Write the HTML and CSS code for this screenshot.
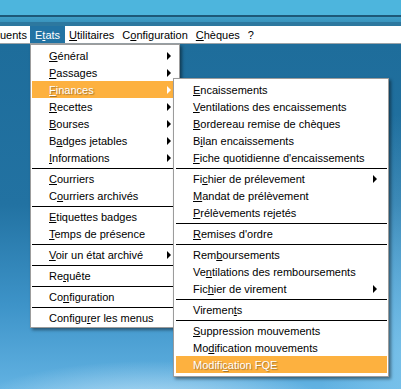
FILE: index.html
```html
<!DOCTYPE html>
<html lang="fr">
<head>
    <meta charset="utf-8">
    <title>Etats</title>
    <link rel="stylesheet" href="styles.css">
</head>
<body>
    <div class="desk">
        <div class="sky"></div>
        <div class="menubar">
            <span class="bar-item first">uents</span>
            <span class="bar-item open">E<u>t</u>ats</span>
            <span class="bar-item"><u>U</u>tilitaires</span>
            <span class="bar-item">C<u>o</u>nfiguration</span>
            <span class="bar-item"><u>C</u>hèques</span>
            <span class="bar-item">?</span>
        </div>
        <div class="ground"></div>

        <!-- menu Etats -->
        <div class="menu menu-etats">
            <div class="item sub"><span><u>G</u>énéral</span><i class="arrow"></i></div>
            <div class="item sub"><span><u>P</u>assages</span><i class="arrow"></i></div>
            <div class="item sub active"><span><u>F</u>inances</span><i class="arrow"></i></div>
            <div class="item sub"><span><u>R</u>ecettes</span><i class="arrow"></i></div>
            <div class="item sub"><span><u>B</u>ourses</span><i class="arrow"></i></div>
            <div class="item sub"><span>B<u>a</u>dges jetables</span><i class="arrow"></i></div>
            <div class="item sub"><span><u>I</u>nformations</span><i class="arrow"></i></div>
            <div class="sep"></div>
            <div class="item"><span><u>C</u>ourriers</span></div>
            <div class="item"><span>C<u>o</u>urriers archivés</span></div>
            <div class="sep"></div>
            <div class="item"><span><u>E</u>tiquettes badges</span></div>
            <div class="item"><span><u>T</u>emps de présence</span></div>
            <div class="sep"></div>
            <div class="item sub"><span><u>V</u>oir un état archivé</span><i class="arrow"></i></div>
            <div class="sep"></div>
            <div class="item"><span>Re<u>q</u>uête</span></div>
            <div class="sep"></div>
            <div class="item"><span>Co<u>n</u>figuration</span></div>
            <div class="sep"></div>
            <div class="item"><span>Configu<u>r</u>er les menus</span></div>
        </div>

        <!-- sous-menu Finances -->
        <div class="menu menu-finances">
            <div class="item"><span><u>E</u>ncaissements</span></div>
            <div class="item"><span><u>V</u>entilations des encaissements</span></div>
            <div class="item"><span><u>B</u>ordereau remise de chèques</span></div>
            <div class="item"><span>B<u>i</u>lan encaissements</span></div>
            <div class="item"><span><u>F</u>iche quotidienne d'encaissements</span></div>
            <div class="sep"></div>
            <div class="item sub"><span>Fi<u>c</u>hier de prélevement</span><i class="arrow"></i></div>
            <div class="item"><span><u>M</u>andat de prélèvement</span></div>
            <div class="item"><span><u>P</u>rélèvements rejetés</span></div>
            <div class="sep"></div>
            <div class="item"><span><u>R</u>emises d'ordre</span></div>
            <div class="sep"></div>
            <div class="item"><span>Rem<u>b</u>oursements</span></div>
            <div class="item"><span>Ve<u>n</u>tilations des remboursements</span></div>
            <div class="item sub"><span>Fic<u>h</u>ier de virement</span><i class="arrow"></i></div>
            <div class="sep"></div>
            <div class="item"><span>Viremen<u>t</u>s</span></div>
            <div class="sep"></div>
            <div class="item"><span><u>S</u>uppression mouvements</span></div>
            <div class="item"><span>Mo<u>d</u>ification mouvements</span></div>
            <div class="item active"><span>Modifi<u>c</u>ation FQE</span></div>
        </div>
    </div>
</body>
</html>
```

FILE: styles.css
```css
html, body {
    margin: 0;
    padding: 0;
}

body {
    width: 401px;
    height: 389px;
    overflow: hidden;
    font-family: "Liberation Sans", Arial, sans-serif;
    font-size: 11px;
    color: #000;
}

.desk {
    position: relative;
    width: 401px;
    height: 389px;
    display: flex;
    flex-direction: column;
}

.sky {
    height: 26px;
    background:
        linear-gradient(to bottom,
            #4db5dd 0, #4db5dd 15px,
            #1d5878 15px, #1d5878 17px,
            #3f9fc8 17px, #3a94bd 22px,
            #2d789f 22px, #2d789f 26px);
}

.menubar {
    height: 17px;
    background: #fff;
    border-bottom: 1px solid #9aa3a8;
    display: flex;
    align-items: stretch;
}

.bar-item {
    display: flex;
    align-items: center;
    padding: 0 4px;
}

.bar-item.first {
    width: 30px;
    padding: 0;
    overflow: hidden;
}

.bar-item.open {
    background: #2273a3;
    color: #fff;
    padding: 0 5px;
}

.ground {
    flex: 1;
    background:
        radial-gradient(ellipse 130px 45px at 50px 389px, rgba(255,255,255,.95), rgba(255,255,255,0)),
        radial-gradient(ellipse 190px 55px at 150px 372px, rgba(220,240,252,.85), rgba(220,240,252,0)),
        radial-gradient(ellipse 80px 240px at 401px 310px, rgba(130,200,238,.75), rgba(130,200,238,0)),
        linear-gradient(to bottom, #1e6d9b 0, #2272a2 160px, #3d93c8 260px, #62b2e2 345px);
}

.menu {
    position: absolute;
    background: #fff;
    border: 1px solid #9c9c9c;
    box-shadow: 2px 2px 3px rgba(0, 0, 0, .45);
}

.menu-etats {
    left: 30px;
    top: 44px;
    width: 146px;
    padding: 2px 1px 1px 1px;
}

.menu-finances {
    left: 173px;
    top: 78px;
    width: 211px;
    padding: 2px 1px 3px 2px;
}

.item {
    height: 17px;
    display: flex;
    align-items: center;
    padding: 0 7px 0 17px;
    white-space: nowrap;
}

.menu-finances .item {
    padding-right: 10px;
}

.item u {
    text-decoration: underline;
    text-underline-offset: 1px;
}

.item.active {
    background: #fdb13f;
    color: #fff;
    text-shadow: 1px 1px 1px rgba(90, 70, 40, .55);
}

.arrow {
    margin-left: auto;
    width: 0;
    height: 0;
    border-top: 4px solid transparent;
    border-bottom: 4px solid transparent;
    border-left: 4px solid #000;
}

.item.active .arrow {
    border-left-color: #fff;
}

.sep {
    height: 4px;
    display: flex;
    align-items: center;
}

.sep::before {
    content: "";
    flex: 1;
    height: 1px;
    background: #000;
}
```
